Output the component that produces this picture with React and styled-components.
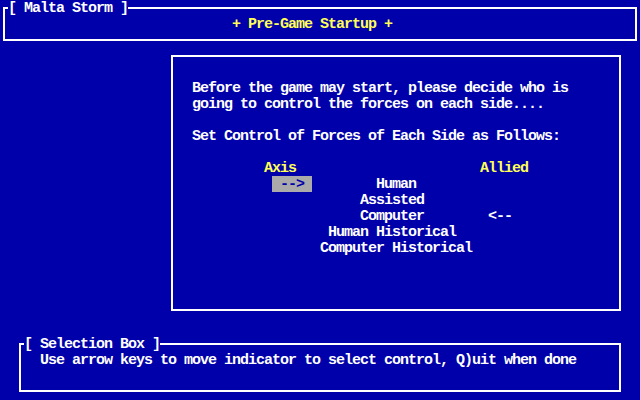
import React from "react";
import styled, { createGlobalStyle, css } from "styled-components";

const CELL = 8;
const BLUE = "#0000aa";
const WHITE = "#ffffff";
const YELLOW = "#ffff55";
const GRAY = "#aaaaaa";

const GlobalStyle = createGlobalStyle`
  html, body {
    margin: 0;
    padding: 0;
    background: ${BLUE};
  }
  body {
    width: 640px;
    height: 400px;
    overflow: hidden;
    font-family: "Liberation Mono", "DejaVu Sans Mono", monospace;
    font-weight: bold;
    font-size: 15px;
    letter-spacing: -1px;
    line-height: 16px;
    color: ${WHITE};
  }
`;

/* one text row of the 80x25 character grid */
const textRow = css`
  box-sizing: border-box;
  height: 16px;
  padding-top: 1px;
  line-height: 15px;
  white-space: pre;
`;

const Screen = styled.div`
  width: 640px;
  height: 400px;
  background: ${BLUE};
`;

const Frame = styled.fieldset`
  display: block;
  box-sizing: border-box;
  min-width: 0;
  margin: ${(p) => p.$margin};
  width: ${(p) => p.$width}px;
  padding: 0;
  border: 2px solid ${WHITE};
`;

const Caption = styled.legend`
  ${textRow};
  padding-left: 0;
  padding-right: 0;
  margin-left: 3px;
  color: ${WHITE};
`;

const Banner = styled.div`
  ${textRow};
  margin: 0 0 7px 227px;
  color: ${YELLOW};
`;

const Panel = styled.section`
  box-sizing: border-box;
  margin: 14px 0 0 171px;
  width: 450px;
  height: 256px;
  border: 2px solid ${WHITE};
  padding: 23px 0 0 19px;
`;

const Line = styled.div`
  ${textRow};
  margin-bottom: ${(p) => (p.$gap ? 16 : 0)}px;
`;

const ChoiceGrid = styled.div`
  margin-left: ${9 * CELL}px;
  display: grid;
  grid-template-columns: ${7 * CELL}px ${20 * CELL}px auto;
  grid-auto-rows: 16px;
`;

const SideLabel = styled.div`
  ${textRow};
  color: ${YELLOW};
`;

const Pointer = styled.div`
  ${textRow};
  margin-left: ${CELL}px;
  width: ${5 * CELL}px;
  background: ${GRAY};
  color: ${BLUE};
  text-align: center;
`;

const RightPointer = styled.div`
  ${textRow};
  margin-left: ${CELL}px;
`;

const Option = styled.div`
  ${textRow};
  grid-column: 2;
  padding-left: ${(p) => p.$indent * CELL}px;
`;

const Empty = styled.div``;

const Help = styled.div`
  ${textRow};
  margin: 0 0 22px 19px;
`;

const options = [
  { label: "Human", indent: 7 },
  { label: "Assisted", indent: 5 },
  { label: "Computer", indent: 5 },
  { label: "Human Historical", indent: 1 },
  { label: "Computer Historical", indent: 0 },
];

const axisIndex = 0;
const alliedIndex = 2;

export default function App() {
  return (
    <Screen>
      <GlobalStyle />
      <Frame $margin="0 0 0 3px" $width={634}>
        <Caption>[ Malta Storm ]</Caption>
        <Banner>+ Pre-Game Startup +</Banner>
      </Frame>

      <Panel>
        <Line>Before the game may start, please decide who is</Line>
        <Line $gap>going to control the forces on each side....</Line>
        <Line $gap>Set Control of Forces of Each Side as Follows:</Line>
        <ChoiceGrid>
          <SideLabel>Axis</SideLabel>
          <Empty />
          <SideLabel>Allied</SideLabel>
          {options.map((o, i) => (
            <React.Fragment key={o.label}>
              {i === axisIndex ? <Pointer>--&gt;</Pointer> : <Empty />}
              <Option $indent={o.indent}>{o.label}</Option>
              {i === alliedIndex ? <RightPointer>&lt;--</RightPointer> : <Empty />}
            </React.Fragment>
          ))}
        </ChoiceGrid>
      </Panel>

      <Frame $margin="25px 0 0 19px" $width={602}>
        <Caption>[ Selection Box ]</Caption>
        <Help>Use arrow keys to move indicator to select control, Q)uit when done</Help>
      </Frame>
    </Screen>
  );
}
